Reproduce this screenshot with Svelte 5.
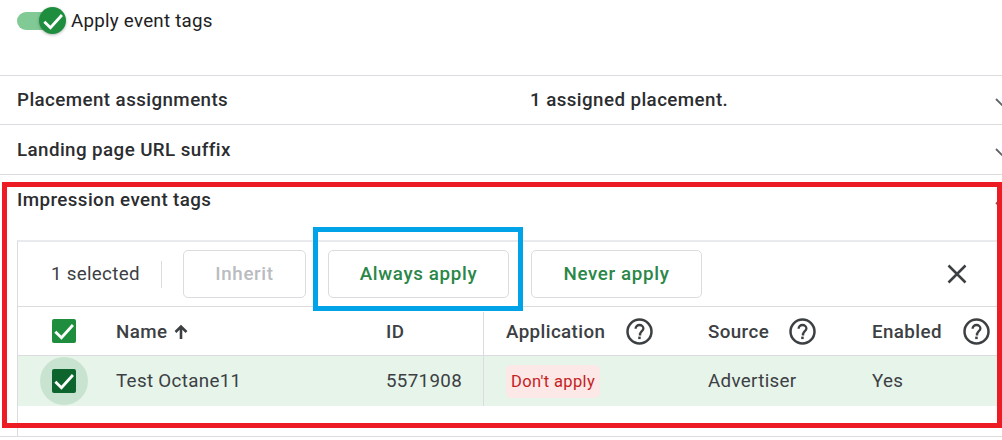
<script lang="ts">
	const sections = [
		{ title: 'Placement assignments', summary: '1 assigned placement.' },
		{ title: 'Landing page URL suffix', summary: '' },
	];

	const columns = [
		{ label: 'Application', help: true },
		{ label: 'Source', help: true },
		{ label: 'Enabled', help: true },
	];
</script>

{#snippet check()}
	<svg class="check" viewBox="0 0 24 24" aria-hidden="true">
		<path d="M5.5 12.5l4.6 4.6 8.6-9.6" fill="none" stroke="#fff" stroke-width="2.1" />
	</svg>
{/snippet}

{#snippet help()}
	<svg class="help" viewBox="0 0 27 27" aria-hidden="true">
		<circle cx="13.5" cy="13.5" r="12" fill="none" stroke="#3c4043" stroke-width="2.5" />
		<path d="M9.6 10.8c0-2.2 1.7-3.8 3.9-3.8s3.9 1.5 3.9 3.5c0 2.7-3.3 2.8-3.3 5.9h-1.3" fill="none" stroke="#3c4043" stroke-width="2.3" />
		<rect x="12.2" y="18.6" width="2.5" height="2.5" fill="#3c4043" />
	</svg>
{/snippet}

<div class="page">
	<div class="toggle-row">
		<span class="toggle">
			<span class="thumb">{@render check()}</span>
		</span>
		<span class="toggle-label">Apply event tags</span>
	</div>

	{#each sections as s}
		<div class="section">
			<span class="section-title">{s.title}</span>
			<span class="section-summary">{s.summary}</span>
			<svg class="chevron" viewBox="0 0 16 10" aria-hidden="true">
				<path d="M1 1l7 7 7-7" fill="none" stroke="#5f6368" stroke-width="1.8" />
			</svg>
		</div>
	{/each}

	<div class="section open">
		<div class="open-head">
			<span class="section-title">Impression event tags</span>
			<svg class="chevron up" viewBox="0 0 16 10" aria-hidden="true">
				<path d="M1 9l7-7 7 7" fill="none" stroke="#5f6368" stroke-width="1.8" />
			</svg>
		</div>

		<div class="card">
			<div class="toolbar">
				<span class="selected">1 selected</span>
				<span class="divider"></span>
				<button class="btn inherit">Inherit</button>
				<button class="btn always">Always apply</button>
				<button class="btn never">Never apply</button>
				<svg class="close" viewBox="0 0 22 22" aria-hidden="true">
					<path d="M2.5 2.5l17 17M19.5 2.5l-17 17" fill="none" stroke="#3c4043" stroke-width="2.5" />
				</svg>
			</div>

			<div class="grid head">
				<div class="cell check-cell"><span class="box">{@render check()}</span></div>
				<div class="cell name">Name<span class="arrow">
					<svg viewBox="0 0 16 16" aria-hidden="true">
						<path d="M8 15V3M2.5 8L8 2.5 13.5 8" fill="none" stroke="#3c4043" stroke-width="2.6" />
					</svg>
				</span></div>
				<div class="cell id">ID</div>
				{#each columns as c}
					<div class="cell col-{c.label.toLowerCase()}"><span class="col-label">{c.label}</span>{@render help()}</div>
				{/each}
			</div>

			<div class="grid row">
				<div class="cell check-cell">
					<span class="halo"></span>
					<span class="box dark">{@render check()}</span>
				</div>
				<div class="cell">Test Octane11</div>
				<div class="cell id">5571908</div>
				<div class="cell col-application"><span class="chip">Don't apply</span></div>
				<div class="cell col-source">Advertiser</div>
				<div class="cell col-enabled">Yes</div>
			</div>
			<div class="card-foot"></div>
		</div>
	</div>
	<div class="end-line"></div>

	<!-- hand-drawn annotation frames sitting on top of the screenshot -->
	<div class="mark red"></div>
	<div class="mark blue"></div>
</div>

<style>
	:global(body) {
		margin: 0;
		background: #fff;
		overflow: hidden;
	}

	.page {
		position: relative;
		width: 1002px;
		height: 440px;
		overflow: hidden;
		font-family: Roboto, "Liberation Sans", sans-serif;
		color: #3c4043;
	}

	.toggle-row {
		display: flex;
		align-items: flex-start;
		height: 75px;
		padding: 7px 0 0 17px;
		box-sizing: border-box;
	}

	.toggle {
		position: relative;
		width: 43px;
		height: 18px;
		margin-top: 5px;
		border-radius: 9px;
		background: #81c995;
	}

	.thumb {
		position: absolute;
		left: 22px;
		top: -5px;
		width: 27px;
		height: 27px;
		border-radius: 50%;
		background: #1e8e3e;
		box-shadow: 0 1px 3px rgba(60, 64, 67, 0.4);
		display: flex;
		align-items: center;
		justify-content: center;
	}

	.toggle-label {
		margin-left: 11px;
		padding-top: 1px;
		font-size: 18.75px;
		line-height: 27px;
		letter-spacing: 0.25px;
		color: #202124;
	}

	.section {
		display: flex;
		align-items: center;
		height: 49px;
		padding-left: 17px;
		box-sizing: border-box;
		border-top: 1px solid #dadce0;
	}

	.section:nth-of-type(3) {
		height: 50px;
	}

	.section-title {
		width: 513px;
		font-size: 18.75px;
		font-weight: 500;
		letter-spacing: 0.42px;
		color: #2b2d30;
	}

	.section-summary {
		flex: 1;
		font-size: 18.75px;
		font-weight: 500;
		letter-spacing: 0.42px;
		color: #2b2d30;
	}

	.chevron {
		flex: none;
		width: 16px;
		height: 10px;
		margin-right: -9px;
		margin-top: 6px;
	}

	.open {
		display: block;
		height: 262px;
	}

	.open-head {
		display: flex;
		align-items: center;
		justify-content: space-between;
		height: 50px;
	}

	.chevron.up {
		margin-top: 0;
	}

	.card {
		margin-top: 15px;
		border-top: 2px solid #e8eaed;
		border-left: 1px solid #dadce0;
		height: 195px;
	}

	.toolbar {
		display: flex;
		align-items: center;
		height: 64px;
		padding-left: 33px;
		border-bottom: 1px solid #dadce0;
	}

	.selected {
		width: 87px;
		font-size: 18.75px;
		letter-spacing: 0.3px;
		white-space: nowrap;
	}

	.divider {
		width: 1px;
		height: 27px;
		margin: 0 21px 0 23px;
		background: #dadce0;
	}

	.btn {
		height: 48px;
		padding: 0;
		box-sizing: border-box;
		border: 1px solid #dadce0;
		border-radius: 5px;
		background: #fff;
		font-family: Roboto, "Liberation Sans", sans-serif;
		font-size: 18.75px;
		font-weight: 500;
		letter-spacing: 0.65px;
		color: #2a8748;
	}

	.inherit {
		width: 123px;
		color: #b9bcc0;
	}

	.always {
		width: 181px;
		margin-left: 22px;
	}

	.never {
		width: 171px;
		margin-left: 22px;
	}

	.close {
		width: 22px;
		height: 22px;
		margin-left: 244px;
	}

	.grid {
		display: grid;
		grid-template-columns: 98px 270px 98px 224px 164px 1fr;
		align-items: stretch;
	}

	.head {
		height: 48px;
		font-size: 18.75px;
		font-weight: 500;
		letter-spacing: 0.4px;
		border-bottom: 1px solid #dadce0;
	}

	.row {
		height: 50px;
		font-size: 18.75px;
		letter-spacing: 0.33px;
		background: #e6f4ea;
	}

	.cell {
		display: flex;
		align-items: center;
		position: relative;
	}

	.name {
		padding-top: 2px;
	}

	.id {
		border-right: 1px solid #dadce0;
	}

	.head .id {
		margin-top: 5px;
		padding-bottom: 3px;
	}

	.col-application {
		padding-left: 22px;
	}

	.col-label {
		flex: none;
		padding-top: 2px;
	}

	.col-application .col-label {
		width: 120px;
	}

	.col-source .col-label {
		width: 81px;
	}

	.col-enabled .col-label {
		width: 91px;
	}

	.help {
		flex: none;
		width: 27px;
		height: 27px;
	}

	.arrow svg {
		display: block;
		width: 16px;
		height: 16px;
	}

	.arrow {
		display: inline-block;
		margin-left: 6px;
	}

	.check-cell {
		justify-content: flex-start;
		padding-left: 34px;
	}

	.box {
		position: relative;
		display: flex;
		align-items: center;
		justify-content: center;
		width: 24px;
		height: 24px;
		border-radius: 2px;
		background: #1e8e3e;
	}

	.box.dark {
		background: #0d652d;
	}

	.halo {
		position: absolute;
		left: 22px;
		top: 1px;
		width: 48px;
		height: 48px;
		border-radius: 50%;
		background: #c8e4d0;
	}

	.check {
		flex: none;
		width: 32px;
		height: 32px;
	}

	.chip {
		display: flex;
		align-items: center;
		height: 33px;
		padding: 0 5px;
		border-radius: 5px;
		background: #fce8e6;
		font-size: 16.5px;
		letter-spacing: 0.35px;
		color: #c5221f;
	}

	.end-line {
		border-top: 1px solid #dadce0;
	}

	.mark {
		position: absolute;
		box-sizing: border-box;
		border-style: solid;
		border-width: 5px;
	}

	.red {
		left: 2px;
		top: 182px;
		width: 1000px;
		height: 246px;
		border-color: #ed1c24;
	}

	.blue {
		left: 313px;
		top: 227px;
		width: 210px;
		height: 84px;
		border-color: #00a2e8;
	}
</style>
